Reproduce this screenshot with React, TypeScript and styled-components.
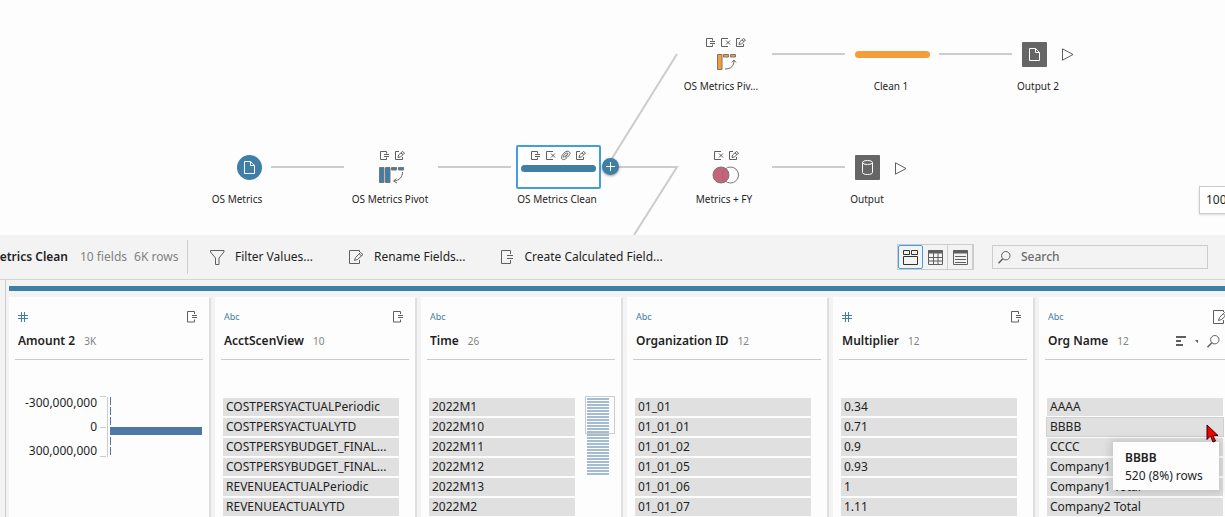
import React from "react";
import styled, { createGlobalStyle } from "styled-components";

const blue = "#3f7ea6";
const orange = "#f59d38";
const line = "#cccccc";
const ink = "#5f5f5f";

const GlobalStyle = createGlobalStyle`
  * { box-sizing: border-box; }
  body {
    margin: 0;
    background: #fdfdfd;
    color: #1f1f1f;
    font: 12px/18px "Noto Sans", "Open Sans", sans-serif;
    overflow: hidden;
  }
  button, input { font: inherit; color: inherit; }
  svg { display: block; flex: none; }
`;

const Page = styled.main`
  display: flex;
  flex-direction: column;
  height: 100vh;
  min-width: 0;
`;

/* ---------- flow canvas ---------- */

const Canvas = styled.section`
  position: relative;
  flex: none;
  height: 235px;
  overflow: hidden;
  background: #fdfdfd;
`;

const Edges = styled.svg`
  position: absolute;
  inset: 0;
`;

const Mark = styled.div<{ $x: number; $y: number }>`
  position: absolute;
  left: ${(p) => p.$x}px;
  top: ${(p) => p.$y}px;
`;

const NodeLabel = styled.div<{ $x: number; $y: number }>`
  position: absolute;
  left: ${(p) => p.$x - 60}px;
  top: ${(p) => p.$y}px;
  width: 120px;
  text-align: center;
  font-size: 10px;
  line-height: 16px;
  white-space: nowrap;
`;

const Changes = styled.div`
  display: flex;
  gap: 5px;
`;

const Tile = styled.div<{ $round?: boolean }>`
  display: grid;
  place-items: center;
  width: 25px;
  height: 25px;
  border-radius: ${(p) => (p.$round ? "50%" : "1px")};
  background: ${(p) => (p.$round ? blue : "#666666")};
`;

const StepBar = styled.div<{ $color: string }>`
  width: 75px;
  height: 7px;
  border-radius: 4px;
  background: ${(p) => p.$color};
`;

const SelectedStep = styled.div`
  display: flex;
  flex-direction: column;
  align-items: center;
  gap: 4px;
  width: 85px;
  height: 44px;
  padding-top: 4px;
  border: 2px solid #429edc;
  border-radius: 2px;
  background: #ffffff;
`;

const IconButton = styled.button`
  display: grid;
  place-items: center;
  padding: 0;
  border: 0;
  background: none;
`;

const AddButton = styled(IconButton)`
  width: 17px;
  height: 17px;
  border-radius: 50%;
  background: ${blue};
  box-shadow: 0 1px 3px rgba(0, 0, 0, 0.4);
`;

const ZoomLevel = styled.button`
  position: absolute;
  right: -36px;
  top: 186px;
  width: 62px;
  height: 28px;
  padding: 0 6px;
  border: 1px solid ${line};
  background: #ffffff;
  box-shadow: 0 1px 2px rgba(0, 0, 0, 0.15);
  text-align: left;
`;

/* ---------- toolbar ---------- */

const Toolbar = styled.header`
  display: flex;
  align-items: center;
  flex: none;
  height: 45px;
  padding-right: 17px;
  background: #f3f3f3;
  border-bottom: 1px solid #d4d4d4;
`;

const StepName = styled.h1`
  display: flex;
  justify-content: flex-end;
  width: 68px;
  margin: 0;
  overflow: hidden;
  white-space: nowrap;
  font-size: 12px;
  font-weight: 600;
`;

const Counts = styled.div`
  display: flex;
  gap: 7px;
  width: 119px;
  padding-left: 12px;
  color: #828282;
  white-space: nowrap;
`;

const Divider = styled.div`
  width: 1px;
  height: 34px;
  background: ${line};
`;

const Actions = styled.div`
  display: flex;
  gap: 36px;
  padding-left: 22px;
`;

const Action = styled.button`
  display: flex;
  align-items: center;
  gap: 10px;
  padding: 0;
  border: 0;
  background: none;
  white-space: nowrap;
`;

const ViewSwitch = styled.div`
  display: flex;
  margin-left: auto;
  border: 1px solid ${line};
`;

const ViewButton = styled(IconButton)<{ $active?: boolean }>`
  width: 25px;
  height: 24px;
  border-right: 1px solid ${line};
  color: ${(p) => (p.$active ? "#333333" : ink)};
  ${(p) => p.$active && "border: 1px solid #429edc; border-radius: 2px;"}
`;

const SearchBox = styled.label`
  display: flex;
  align-items: center;
  gap: 10px;
  width: 216px;
  height: 24px;
  margin-left: 18px;
  padding: 0 5px;
  border: 1px solid ${line};
`;

const SearchInput = styled.input`
  flex: 1;
  min-width: 0;
  padding: 0;
  border: 0;
  outline: 0;
  background: none;
  &::placeholder {
    color: #6b6b6b;
    font-weight: 500;
    opacity: 1;
  }
`;

/* ---------- profile pane ---------- */

const Profile = styled.section`
  flex: 1;
  min-height: 0;
  margin-left: 5px;
  padding: 6px 0 0 3px;
  border-left: 1px solid ${line};
  background: #f3f3f3;
  overflow: hidden;
`;

const Gutter = styled.div`
  display: flex;
  flex-direction: column;
  flex: 1;
  min-height: 0;
  background: #f3f3f3;
`;

const Accent = styled.div`
  height: 5px;
  background: ${blue};
`;

const Cards = styled.div`
  display: flex;
  gap: 6px;
  height: 100%;
  padding-top: 6px;
`;

const Card = styled.article`
  flex: none;
  width: 200px;
  padding: 12px 6px 0;
  background: #fdfdfd;
  box-shadow: 2px 1px 0 #dfdfdf;
`;

const CardTop = styled.div`
  display: flex;
  justify-content: space-between;
  align-items: center;
  height: 16px;
  padding: 0 5px 0 3px;
`;

const TypeName = styled.span`
  color: ${blue};
  font-size: 9px;
  line-height: 16px;
`;

const CardTitle = styled.div`
  display: flex;
  align-items: center;
  gap: 9px;
  height: 35px;
  padding: 0 3px 2px;
  border-bottom: 1px solid ${line};
  white-space: nowrap;
`;

const FieldName = styled.h2`
  margin: 0;
  font-size: 12px;
  font-weight: 600;
`;

const FieldCount = styled.span`
  color: #828282;
  font-size: 10px;
`;

const CardTools = styled.div`
  display: flex;
  align-items: center;
  gap: 9px;
  margin: 0 -11px 0 auto;
  color: ${ink};
`;

const CardBody = styled.div`
  display: flex;
  justify-content: space-between;
  padding: 38px 6px 0 2px;
`;

const Values = styled.ul`
  display: flex;
  flex-direction: column;
  gap: 2px;
  flex: 1;
  max-width: 176px;
  margin: 0;
  padding: 0;
  list-style: none;
`;

const Value = styled.li<{ $hover?: boolean }>`
  height: 18px;
  padding: 0 3px;
  background: #e0e0e0;
  outline: ${(p) => (p.$hover ? "1px solid #d0d0d0" : "none")};
  white-space: nowrap;
`;

const Overview = styled.div`
  display: flex;
  position: relative;
  flex-direction: column;
  gap: 1px;
  width: 22px;
  margin: 0 0 0 12px;
`;

const OverviewLine = styled.i`
  height: 2px;
  background: #a5bbd2;
`;

const OverviewWindow = styled.div`
  position: absolute;
  left: -2px;
  top: -2px;
  width: 30px;
  height: 38px;
  border: 1px solid ${line};
`;

const Histogram = styled.div`
  display: flex;
  width: 186px;
`;

const AxisLabels = styled.div`
  display: flex;
  flex-direction: column;
  gap: 6px;
  width: 80px;
  margin-top: -4px;
  text-align: right;
`;

const Plot = styled.svg`
  margin: -2px 0 0 3px;
`;

const Tooltip = styled.div`
  position: absolute;
  right: 6px;
  top: 442px;
  width: 106px;
  height: 48px;
  padding: 7px 12px;
  background: #fdfdfd;
  box-shadow: 0 1px 8px 3px rgba(0, 0, 0, 0.12);
  white-space: nowrap;
`;

const TooltipTitle = styled.strong`
  display: block;
  font-weight: 600;
`;

const Pointer = styled.svg`
  position: absolute;
  right: 6px;
  top: 424px;
`;

/* ---------- icons ---------- */

const changePaths = {
  calc: "M6.5 2.5V.5h-6v8h6v-2M4 3.5h5M4 5.5h5",
  remove: "M7 .5H.5v8H7M5 2.5l4 4M9 2.5l-4 4",
  clip: "M1.5 8.5C-.5 6.5 1 4 3 2S7-.5 8.5 1 8 4.500 6 6.500 2.500 9 1.500 8.500M2.500 6.500C1.500 5 4.500 2 6 2s1 1.500-2 4.500M3.500 6L6 3.500",
  edit: "M4 .5H.5v8h7V6M3 6.500l.5-2.500L7.500.5l2 1.500-4 4zM6 2l2 1.500",
};

type Change = keyof typeof changePaths;

const ChangeIcon = ({ kind }: { kind: Change }) => (
  <svg width="10" height="10" viewBox="0 0 10 10" fill="none" stroke={ink} strokeWidth="1" overflow="visible">
    <path d={changePaths[kind]} />
  </svg>
);

const ChangeRow = ({ kinds }: { kinds: Change[] }) => (
  <Changes>
    {kinds.map((k) => (
      <ChangeIcon key={k} kind={k} />
    ))}
  </Changes>
);

const PageIcon = () => (
  <svg width="11" height="13" viewBox="0 0 11 13" fill="none" stroke="#fff" strokeWidth="1">
    <path d="M6.500.5h-6v12h10V4.500L6.500.5v4h4" />
  </svg>
);

const DatabaseIcon = () => (
  <svg width="11" height="15" viewBox="0 0 11 15" fill="none" stroke="#fff">
    <ellipse cx="5.500" cy="2.500" rx="5" ry="2" />
    <path d="M.5 2.500v10c0 1.200 2.200 2 5 2s5-.8 5-2v-10" />
  </svg>
);

const RunIcon = () => (
  <svg width="12" height="13" viewBox="0 0 12 13" fill="none" stroke={ink}>
    <path d="M.5.8v11.400L11 6.500z" />
  </svg>
);

const ColumnsToRows = () => (
  <svg width="26" height="18" viewBox="0 0 26 18">
    <g fill={blue} stroke="#777" strokeWidth="1">
      <path d="M.5 1.500h4.500v15H.5zM6.500 1.500H11v15H6.500zM12.500 1.500h5v2.500h-5zM19.500 1.500h5v2.500h-5z" />
    </g>
    <path d="M23.500 6c0 5-3 8.500-8.500 9M17.500 12.500L14.500 15l3.500 2" fill="none" stroke="#666" />
  </svg>
);

const RowsToColumns = () => (
  <svg width="20" height="18" viewBox="0 0 20 18">
    <g fill={orange} stroke="#777" strokeWidth="1">
      <path d="M.5 1.500H5v15H.5zM6.500 1.500h5V4h-5zM13.500 1.500h5V4h-5z" />
    </g>
    <path d="M8 16c6 0 9-3 9-8.500M14.800 9.500L17 7l2 2.500" fill="none" stroke="#666" />
  </svg>
);

const JoinIcon = () => (
  <svg width="28" height="18" viewBox="0 0 28 18" stroke="#777">
    <circle cx="18.500" cy="9" r="8" fill="#fff" />
    <circle cx="9" cy="9" r="8" fill="#cb627b" />
    <path d="M13.700 2.500a8 8 0 0 0 0 13" fill="none" />
  </svg>
);

const FilterIcon = () => (
  <svg width="15" height="15" viewBox="0 0 15 15" fill="none" stroke={ink}>
    <path d="M.5.5h13.500v1.500L9 8v6.500H5.500V8L.5 2z" />
  </svg>
);

const RenameIcon = () => (
  <svg width="15" height="14" viewBox="0 0 15 14" fill="none" stroke={ink}>
    <path d="M10.500 2V.5H.5v13h10V10M5.500 10.500l1-3 5-5 2.500 2-5.500 5zM10.500 4l2 2" />
  </svg>
);

const CalcIcon = () => (
  <svg width="13" height="14" viewBox="0 0 13 14" fill="none" stroke={ink}>
    <path d="M9.500 4V.5H.5v13h9V10M6 5.500h6M6 8.500h6" />
  </svg>
);

const FieldCalcIcon = () => (
  <svg width="11" height="12" viewBox="0 0 11 12" fill="none" stroke={ink}>
    <path d="M7.500 3V.5H.5v10.500h7V8.500M5 4.500h5M5 6.500h5" />
  </svg>
);

const HashIcon = () => (
  <svg width="10" height="10" viewBox="0 0 10 10" fill="none" stroke={blue}>
    <path d="M3.500 0v10M6.500 0v10M0 3.500h10M0 6.500h10" />
  </svg>
);

const SearchIcon = () => (
  <svg width="13" height="13" viewBox="0 0 13 13" fill="none" stroke={ink}>
    <circle cx="7.800" cy="4.700" r="4.200" />
    <path d="M4.800 7.800L.5 12.200" strokeWidth="1.500" />
  </svg>
);

const ProfileViewIcon = () => (
  <svg width="15" height="15" viewBox="0 0 15 15" fill="none" stroke="currentColor">
    <path d="M.5.5h6v4h-6zM8.500.5h6v4h-6zM.5 6.500h14v8H.5z" />
  </svg>
);

const GridViewIcon = () => (
  <svg width="15" height="15" viewBox="0 0 15 15" fill="none" stroke="currentColor">
    <path d="M.5.5h14v14H.5zM.5 7.500h14M.5 11h14M5.500 3v12M10 3v12" />
    <path d="M0 2h15" strokeWidth="3" />
  </svg>
);

const ListViewIcon = () => (
  <svg width="15" height="15" viewBox="0 0 15 15" fill="none" stroke="currentColor">
    <path d="M.5.5h14v14H.5zM2 6.500h11M2 9.500h11M2 12.500h11" />
    <path d="M0 2h15" strokeWidth="3" />
  </svg>
);

const SortIcon = () => (
  <svg width="22" height="10" viewBox="0 0 22 10" fill={ink}>
    <path d="M0 0h10v2H0zM0 4h5v2H0zM0 8h7v2H0zM19 4h5l-2.500 3z" />
  </svg>
);

const MoreIcon = () => (
  <svg width="12" height="2" viewBox="0 0 12 2" fill={ink}>
    <path d="M0 0h2v2H0zM5 0h2v2H5zM10 0h2v2h-2z" />
  </svg>
);

/* ---------- data ---------- */

type Field = {
  name: string;
  count: string;
  numeric?: boolean;
  icon?: "calc" | "rename";
  tools?: boolean;
  overview?: number;
  values?: string[];
};

const fields: Field[] = [
  { name: "Amount 2", count: "3K", numeric: true, icon: "calc" },
  {
    name: "AcctScenView",
    count: "10",
    icon: "calc",
    values: [
      "COSTPERSYACTUALPeriodic",
      "COSTPERSYACTUALYTD",
      "COSTPERSYBUDGET_FINAL...",
      "COSTPERSYBUDGET_FINAL...",
      "REVENUEACTUALPeriodic",
      "REVENUEACTUALYTD",
    ],
  },
  {
    name: "Time",
    count: "26",
    overview: 26,
    values: ["2022M1", "2022M10", "2022M11", "2022M12", "2022M13", "2022M2"],
  },
  {
    name: "Organization ID",
    count: "12",
    values: ["01_01", "01_01_01", "01_01_02", "01_01_05", "01_01_06", "01_01_07"],
  },
  {
    name: "Multiplier",
    count: "12",
    numeric: true,
    icon: "calc",
    values: ["0.34", "0.71", "0.9", "0.93", "1", "1.11"],
  },
  {
    name: "Org Name",
    count: "12",
    icon: "rename",
    tools: true,
    values: ["AAAA", "BBBB", "CCCC", "Company1", "Company1 Total", "Company2 Total"],
  },
];

const labels: [string, number, number][] = [
  ["OS Metrics", 237, 191],
  ["OS Metrics Pivot", 390, 191],
  ["OS Metrics Clean", 557, 191],
  ["Metrics + FY", 724, 191],
  ["Output", 867, 191],
  ["OS Metrics Piv...", 721, 78],
  ["Clean 1", 891, 78],
  ["Output 2", 1038, 78],
];

const FlowCanvas = () => (
  <Canvas aria-label="Flow">
    <Edges width="1225" height="235" fill="none" stroke={line} strokeWidth="2">
      <path d="M271 167h73M438 167h73M772 167h73M772 54h73M939 54h73" />
      <path d="M611 160L677 54M611 167h66L634 235" />
    </Edges>
    <Mark $x={237} $y={155}>
      <Tile $round>
        <PageIcon />
      </Tile>
    </Mark>
    <Mark $x={380} $y={151}>
      <ChangeRow kinds={["calc", "edit"]} />
    </Mark>
    <Mark $x={379} $y={166}>
      <ColumnsToRows />
    </Mark>
    <Mark $x={516} $y={145}>
      <SelectedStep>
        <ChangeRow kinds={["calc", "remove", "clip", "edit"]} />
        <StepBar $color={blue} />
      </SelectedStep>
    </Mark>
    <Mark $x={602} $y={158}>
      <AddButton aria-label="Add step">
        <svg width="11" height="11" viewBox="0 0 11 11" stroke="#fff">
          <path d="M5.500 1v9M1 5.500h9" />
        </svg>
      </AddButton>
    </Mark>
    <Mark $x={714} $y={151}>
      <ChangeRow kinds={["remove", "edit"]} />
    </Mark>
    <Mark $x={712} $y={166}>
      <JoinIcon />
    </Mark>
    <Mark $x={855} $y={155}>
      <Tile>
        <DatabaseIcon />
      </Tile>
    </Mark>
    <Mark $x={895} $y={162}>
      <IconButton aria-label="Run Output">
        <RunIcon />
      </IconButton>
    </Mark>
    <Mark $x={706} $y={38}>
      <ChangeRow kinds={["calc", "remove", "edit"]} />
    </Mark>
    <Mark $x={717} $y={53}>
      <RowsToColumns />
    </Mark>
    <Mark $x={855} $y={51}>
      <StepBar $color={orange} />
    </Mark>
    <Mark $x={1022} $y={42}>
      <Tile>
        <PageIcon />
      </Tile>
    </Mark>
    <Mark $x={1062} $y={48}>
      <IconButton aria-label="Run Output 2">
        <RunIcon />
      </IconButton>
    </Mark>
    {labels.map(([text, x, y]) => (
      <NodeLabel key={text} $x={x} $y={y}>
        {text}
      </NodeLabel>
    ))}
    <ZoomLevel>100%</ZoomLevel>
  </Canvas>
);

const AmountHistogram = () => (
  <Histogram>
    <AxisLabels>
      <span>-300,000,000</span>
      <span>0</span>
      <span>300,000,000</span>
    </AxisLabels>
    <Plot width="103" height="61" viewBox="0 0 103 61">
      <path d="M0 .5h6M0 31.500h6M0 60.500h6" stroke={line} />
      <path d="M7.500 1v60" stroke={line} />
      <path d="M10 1h1v8h-1zM10 11h1v8h-1zM10 21h1v8h-1zM10 31h92v8H10zM10 41h1v8h-1zM10 51h1v8h-1z" fill="#4e79a7" />
    </Plot>
  </Histogram>
);

const FieldCard = ({ field }: { field: Field }) => (
  <Card>
    <CardTop>
      {field.numeric ? <HashIcon /> : <TypeName>Abc</TypeName>}
      {field.icon === "calc" && <FieldCalcIcon />}
      {field.icon === "rename" && <RenameIcon />}
    </CardTop>
    <CardTitle>
      <FieldName>{field.name}</FieldName>
      <FieldCount>{field.count}</FieldCount>
      {field.tools && (
        <CardTools>
          <IconButton aria-label="Sort">
            <SortIcon />
          </IconButton>
          <IconButton aria-label="Search values">
            <SearchIcon />
          </IconButton>
          <IconButton aria-label="More options">
            <MoreIcon />
          </IconButton>
        </CardTools>
      )}
    </CardTitle>
    <CardBody>
      {field.values ? (
        <Values>
          {field.values.map((v, i) => (
            <Value key={i} $hover={v === "BBBB"}>
              {v}
            </Value>
          ))}
        </Values>
      ) : (
        <AmountHistogram />
      )}
      {field.overview && (
        <Overview>
          {Array.from({ length: field.overview }, (_, i) => (
            <OverviewLine key={i} />
          ))}
          <OverviewWindow />
        </Overview>
      )}
    </CardBody>
  </Card>
);

export default function App() {
  return (
    <Page>
      <GlobalStyle />
      <FlowCanvas />
      <Toolbar>
        <StepName>OS Metrics Clean</StepName>
        <Counts>
          <span>10 fields</span>
          <span>6K rows</span>
        </Counts>
        <Divider />
        <Actions>
          <Action>
            <FilterIcon />
            Filter Values...
          </Action>
          <Action>
            <RenameIcon />
            Rename Fields...
          </Action>
          <Action>
            <CalcIcon />
            Create Calculated Field...
          </Action>
        </Actions>
        <ViewSwitch>
          <ViewButton $active aria-label="Profile view">
            <ProfileViewIcon />
          </ViewButton>
          <ViewButton aria-label="Grid view">
            <GridViewIcon />
          </ViewButton>
          <ViewButton aria-label="List view">
            <ListViewIcon />
          </ViewButton>
        </ViewSwitch>
        <SearchBox>
          <SearchIcon />
          <SearchInput type="text" placeholder="Search" aria-label="Search" />
        </SearchBox>
      </Toolbar>
      <Gutter>
        <Profile>
          <Accent />
          <Cards>
            {fields.map((f) => (
              <FieldCard key={f.name} field={f} />
            ))}
          </Cards>
        </Profile>
      </Gutter>
      <Tooltip role="tooltip">
        <TooltipTitle>BBBB</TooltipTitle>
        520 (8%) rows
      </Tooltip>
      <Pointer width="13" height="20" viewBox="0 0 13 20">
        <path d="M1 1v14.500l3.500-3.500 2.500 6 2.500-1-2.500-5.500H12z" fill="#f40000" stroke="#3a0000" />
      </Pointer>
    </Page>
  );
}
